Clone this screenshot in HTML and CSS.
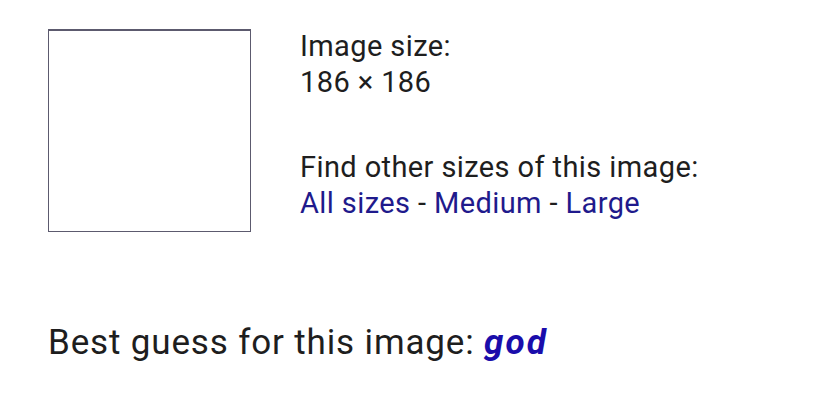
FILE: index.html
```html
<!DOCTYPE html>
<html lang="en">
<head>
  <meta charset="UTF-8" />
  <title>Search by image</title>
  <link rel="stylesheet" href="styles.css">
</head>
<body>
  <main class="result">
    <section class="top">
      <div class="thumb"></div>
      <div class="info">
        <p>Image size:<br>186 × 186</p>
        <p class="other">Find other sizes of this image:<br>
          <a href="#">All sizes</a> - <a href="#">Medium</a> - <a href="#">Large</a>
        </p>
      </div>
    </section>
    <p class="guess">Best guess for this image: <a href="#">god</a></p>
  </main>
</body>
</html>
```
FILE: styles.css
```css
:root {
  --text: #1e1e1e;
  --link: #1f1a8c;
  --guess: #1a0dab;
}
* { box-sizing: border-box; margin: 0; padding: 0; }
body {
  font-family: Roboto, 'Liberation Sans', sans-serif;
  background: #ffffff;
  color: var(--text);
}
.result {
  padding: 28px 0 0 48px;
}
.top {
  display: flex;
  gap: 49px;
}
.thumb {
  width: 203px;
  height: 203px;
  margin-top: 1px;
  border: 1px solid #5c5a6e;
  border-top-width: 2px;
  background: #fff;
}
.info {
  font-size: 29px;
  line-height: 36px;
  letter-spacing: 0.4px;
}
.info .other {
  margin-top: 49px;
}
.info a {
  color: var(--link);
  text-decoration: none;
}
.guess {
  margin-top: 91px;
  font-size: 35px;
  line-height: 40px;
  letter-spacing: 0.85px;
}
.guess a {
  color: var(--guess);
  font-weight: 700;
  font-style: italic;
  letter-spacing: 2px;
  text-decoration: none;
}
```
